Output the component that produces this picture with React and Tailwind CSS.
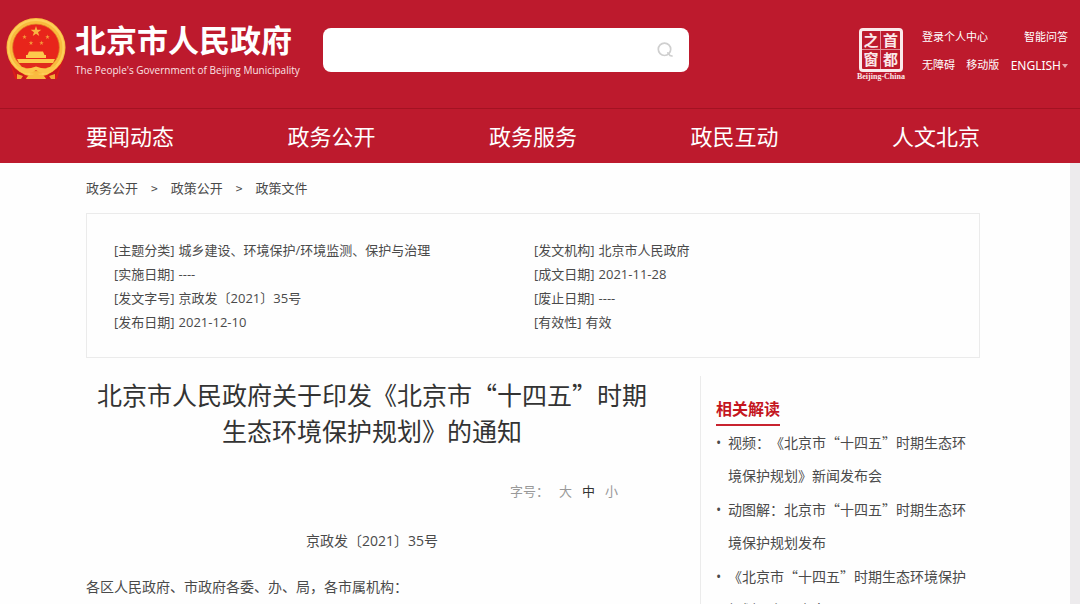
import React from 'react';

const navItems = ['要闻动态', '政务公开', '政务服务', '政民互动', '人文北京'];
const crumbs = ['政务公开', '政策公开', '政策文件'];

const metaLeft = [
  ['主题分类', '城乡建设、环境保护/环境监测、保护与治理'],
  ['实施日期', '----'],
  ['发文字号', '京政发〔2021〕35号'],
  ['发布日期', '2021-12-10'],
];
const metaRight = [
  ['发文机构', '北京市人民政府'],
  ['成文日期', '2021-11-28'],
  ['废止日期', '----'],
  ['有效性', '有效'],
];

const related = [
  '视频：《北京市“十四五”时期生态环境保护规划》新闻发布会',
  '动图解：北京市“十四五”时期生态环境保护规划发布',
  '《北京市“十四五”时期生态环境保护规划》主要内容',
];

const star = 'M0-1L.225-.309L.951-.309L.363.118L.588.809L0 .382L-.588.809L-.363.118L-.951-.309L-.225-.309Z';

function Emblem() {
  return (
    <svg viewBox="0 0 60 62" className="h-[62px] w-[60px] shrink-0" aria-hidden="true">
      <path d="M3 42 Q7 54 9 61 H51 Q53 54 57 42 Z" fill="#dc1c1a" />
      <circle cx="30" cy="29.5" r="25.5" fill="#e8251b" />
      <circle cx="30" cy="29.5" r="26.500" fill="none" stroke="#f9bb3d" strokeWidth="6" />
      <circle cx="30" cy="29.5" r="27.500" fill="none" stroke="#fdd05a" strokeWidth="2" />
      <circle cx="30" cy="29.5" r="23.400" fill="none" stroke="#e08d2a" strokeWidth="0.7" />
      <path d={star} transform="translate(30 13.5) scale(5.6)" fill="#f9b542" />
      <path d={star} transform="translate(18.5 19) scale(2.4)" fill="#f59a3a" />
      <path d={star} transform="translate(41.5 19) scale(2.4)" fill="#f59a3a" />
      <path d={star} transform="translate(25 25) scale(2.4)" fill="#f59a3a" />
      <path d={star} transform="translate(35.5 25) scale(2.4)" fill="#f59a3a" />
      <path d="M23 33.500 H37 L38.500 37 H40 V40 H20 V37 H21.500 Z" fill="#fdc94c" />
      <path d="M11 41 H49 L47 45 H13 Z" fill="#fdc94c" />
      <path d="M13 45 H47 L44 49 H16 Z" fill="#e02a1c" />
      <path d="M9 47 Q15 50 20 50.500 Q25 50.500 30 48.500 Q35 50.500 40 50.500 Q45 50 51 47 Q46 55 39 55.500 L34 54.500 L30 52 L26 54.500 L21 55.500 Q14 55 9 47 Z" fill="#fcc54a" />
      <path d="M3 43 Q8 52 17 56 L20 61 H12 Q8 53 3 43 Z M57 43 Q52 52 43 56 L40 61 H48 Q52 53 57 43 Z" fill="#c9181d" />
      <path d="M11 56 L17 58 L15 61 H11 Z M49 56 L43 58 L45 61 H49 Z" fill="#f2a936" />
      <path d="M20 61 Q22 56 27 56.500 L30 54.500 L33 56.500 Q38 56 40 61 Z" fill="#f9bb3f" />
    </svg>
  );
}

function Seal() {
  return (
    <a href="#capital" className="flex w-[50px] flex-col items-center text-[#fbe9ea]">
      <span className="grid h-11 w-11 grid-cols-2 grid-rows-2 rounded-sm border-[3px] border-[#fbe9ea] text-center font-['Noto_Sans_CJK_SC',sans-serif] text-[15px] leading-[18px] font-bold">
        <span className="border-r border-b border-[#e58f98]">之</span>
        <span className="border-b border-[#e58f98]">首</span>
        <span className="border-r border-[#e58f98]">窗</span>
        <span>都</span>
      </span>
      <span className="font-['Liberation_Serif',serif] text-[8px] leading-[9px] font-bold whitespace-nowrap">Beijing-China</span>
    </a>
  );
}

function MetaColumn({ rows }) {
  return (
    <dl className="font-['Open_Sans','Noto_Sans_CJK_SC',sans-serif] text-[13px] leading-6">
      {rows.map(([label, value]) => (
        <div key={label} className="flex gap-1">
          <dt>[{label}]</dt>
          <dd>{value}</dd>
        </div>
      ))}
    </dl>
  );
}

export default function App() {
  return (
    <div lang="zh-CN" className="min-h-screen bg-[#fefefe] font-['Noto_Sans_CJK_SC',sans-serif] text-[#4a4a4a] [text-spacing-trim:space-all]">
      <header className="bg-[#bd1a2d] text-white">
        <div className="flex h-[108px] items-start pr-3 pl-[6px]">
          <a href="#home" className="flex w-[289px] shrink-0 items-start pt-[18px]">
            <Emblem />
            <span className="flex flex-col gap-[2px] pl-[9px]">
              <span className="text-[31px] leading-[42px] font-bold">北京市人民政府</span>
              <span className="font-['Open_Sans',sans-serif] text-[10px] leading-4 whitespace-nowrap text-[#fbe3e5]">
                The People's Government of Beijing Municipality
              </span>
            </span>
          </a>
          <form role="search" className="mt-7 ml-7 flex h-11 w-[366px] items-center rounded-lg bg-white pr-4" onSubmit={(e) => e.preventDefault()}>
            <input type="search" aria-label="搜索" className="h-full min-w-0 flex-1 rounded-lg bg-transparent px-4 text-sm text-gray-700 outline-none" />
            <button type="submit" aria-label="搜索" className="text-[#cfcfcf]">
              <svg viewBox="0 0 16 16" className="size-4" fill="none" stroke="currentColor" strokeWidth="1.7" strokeLinecap="round">
                <circle cx="7.500" cy="7.300" r="6.200" />
                <path d="M10.800 10.800 L13 13.600 L15 14" />
              </svg>
            </button>
          </form>
          <div className="ml-auto flex gap-4 pt-7">
            <Seal />
            <div className="flex w-[146px] flex-col gap-3 text-[11px] leading-4">
              <div className="flex justify-between">
                <a href="#login">登录个人中心</a>
                <a href="#qa">智能问答</a>
              </div>
              <div className="flex items-start justify-between">
                <a href="#accessible">无障碍</a>
                <a href="#mobile">移动版</a>
                <a href="#english" className="flex items-center gap-px pt-[2px] font-['Noto_Sans',sans-serif] text-xs leading-4">
                  ENGLISH
                  <svg viewBox="0 0 6 6" className="size-[6px]" fill="#e9a3aa" aria-hidden="true">
                    <path d="M0 1 H6 L3 5 Z" />
                  </svg>
                </a>
              </div>
            </div>
          </div>
        </div>
        <nav className="border-t border-[#a31222] pr-[100px] pb-[2px] pl-[86px]">
          <ul className="flex h-[52px] items-center justify-between text-[22px] leading-8">
            {navItems.map((item) => (
              <li key={item}>
                <a href={`#${item}`}>{item}</a>
              </li>
            ))}
          </ul>
        </nav>
      </header>

      <div className="border-r-[10px] border-[#edebed] pr-[90px] pl-[86px]">
        <nav aria-label="面包屑" className="flex h-[50px] items-center gap-[13px] text-[13px]">
          {crumbs.map((crumb, i) => (
            <React.Fragment key={crumb}>
              {i > 0 && <span className="text-xs">&gt;</span>}
              <a href={`#${crumb}`}>{crumb}</a>
            </React.Fragment>
          ))}
        </nav>

        <section className="grid h-[145px] grid-cols-[420px_1fr] border border-[#ebebeb] pt-6 pl-[27px]">
          <MetaColumn rows={metaLeft} />
          <MetaColumn rows={metaRight} />
        </section>

        <div className="flex pt-[18px]">
          <main className="min-w-0 flex-1 pr-[42px]">
            <h1 className="text-center text-[25px] leading-9 text-[#333]">
              北京市人民政府关于印发《北京市“十四五”时期
              <br />
              生态环境保护规划》的通知
            </h1>
            <div className="flex justify-end gap-[10px] pt-[33px] pr-10 text-[13px] leading-5 text-[#999]">
              <span>字号：</span>
              <button type="button">大</button>
              <button type="button" className="text-[#333]">中</button>
              <button type="button">小</button>
            </div>
            <p className="pt-7 text-center font-['Open_Sans','Noto_Sans_CJK_SC',sans-serif] text-sm leading-6">京政发〔2021〕35号</p>
            <p className="pt-[21px] text-sm leading-6">各区人民政府、市政府各委、办、局，各市属机构：</p>
          </main>
          <aside className="w-[280px] border-l border-[#ebebeb] pt-5 pl-[15px]">
            <h2 className="inline-block border-b-2 border-[#c8232f] pb-1 text-base leading-6 font-bold text-[#c4161f]">相关解读</h2>
            <ul className="flex flex-col gap-px text-sm leading-[33px]">
              {related.map((item) => (
                <li key={item} className="flex gap-1">
                  <span className="w-2 font-['Open_Sans',sans-serif]">•</span>
                  <a href="#related" className="w-[244px]">{item}</a>
                </li>
              ))}
            </ul>
          </aside>
        </div>
      </div>
    </div>
  );
}
